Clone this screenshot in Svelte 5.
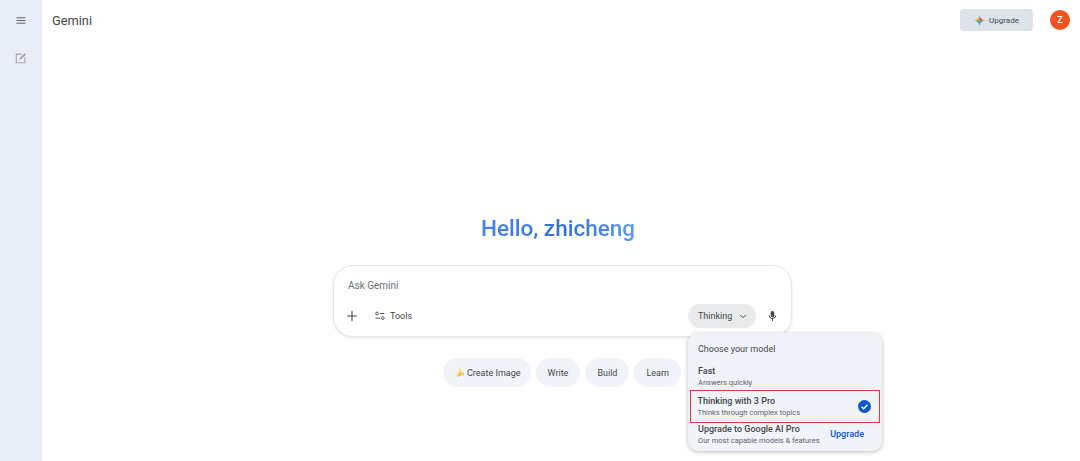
<script>
  const chips = ['Write', 'Build', 'Learn'];
</script>

<div class="page">
  <aside class="rail">
    <button class="rail-btn menu" aria-label="Menu">
      <svg width="10" height="7" viewBox="0 0 10 7"><path d="M.5 .8h9M.5 3.500h9M.5 6.200h9" stroke="#5f6368" stroke-width="1" fill="none" /></svg>
    </button>
    <button class="rail-btn new" aria-label="New chat">
      <svg width="12" height="12" viewBox="0 0 14 14" fill="none">
        <path d="M7.500 2.500H1.500v10h10V6.500" stroke="#a2a6ab" stroke-width="1.300" />
        <path d="M5.500 8.600V7l5.800-5.800 1.600 1.600L7.100 8.600z" fill="#a2a6ab" />
      </svg>
    </button>
  </aside>

  <main class="main">
    <header class="top">
      <span class="brand">Gemini</span>
      <div class="top-right">
        <button class="upgrade-top">
          <svg width="11" height="11" viewBox="0 0 24 24">
            <path d="M12 0C11 7 7 11 0 12h12z" fill="#f2a93b" />
            <path d="M0 12c7 1 11 5 12 12V12z" fill="#34a853" />
            <path d="M12 24c1-7 5-11 12-12H12z" fill="#4285f4" />
            <path d="M24 12C17 11 13 7 12 0v12z" fill="#ea4335" />
          </svg>
          Upgrade
        </button>
        <span class="avatar">Z</span>
      </div>
    </header>

    <section class="center">
      <h1 class="hello">Hello, zhicheng</h1>

      <div class="composer">
        <div class="placeholder">Ask Gemini</div>
        <div class="tools-row">
          <div class="tools-left">
            <svg class="plus" width="10" height="10" viewBox="0 0 10 10"><path d="M5 0v10M0 5h10" stroke="#444746" stroke-width="1.100" /></svg>
            <span class="tools">
              <svg width="10" height="10" viewBox="0 0 11 10" fill="none" stroke="#444746" stroke-width="1">
                <circle cx="2.200" cy="2.200" r="1.500" />
                <path d="M5.200 2.200h5M.6 7.400h5" />
                <circle cx="8.600" cy="7.400" r="1.500" />
              </svg>
              Tools
            </span>
          </div>
          <div class="tools-right">
            <span class="mode">
              Thinking
              <svg width="8" height="5" viewBox="0 0 9 6" fill="none"><path d="M1 1l3.500 3.500L8 1" stroke="#444746" stroke-width="1.100" /></svg>
            </span>
            <svg class="mic" width="9" height="12" viewBox="0 0 10 12" fill="#444746">
              <rect x="3" y="0.500" width="4" height="7" rx="2" />
              <path d="M1 5.500h1c0 1.800 1.300 2.800 3 2.800s3-1 3-2.800h1c0 2.200-1.500 3.500-3.500 3.700V11.500h-1V9.200C2.500 9 1 7.700 1 5.500z" />
            </svg>
          </div>
        </div>

        <div class="popup">
          <div class="popup-title">Choose your model</div>
          <div class="opt">
            <div class="opt-text">
              <div class="opt-name">Fast</div>
              <div class="opt-sub">Answers quickly</div>
            </div>
          </div>
          <div class="opt selected">
            <div class="opt-text">
              <div class="opt-name">Thinking with 3 Pro</div>
              <div class="opt-sub">Thinks through complex topics</div>
            </div>
            <svg width="13" height="13" viewBox="0 0 13 13">
              <circle cx="6.500" cy="6.500" r="6.500" fill="#0b57d0" />
              <path d="M3.500 6.700l2.100 2 3.900-4" fill="none" stroke="#fff" stroke-width="1.400" />
            </svg>
          </div>
          <div class="opt last">
            <div class="opt-text">
              <div class="opt-name">Upgrade to Google AI Pro</div>
              <div class="opt-sub">Our most capable models &amp; features</div>
            </div>
            <span class="opt-link">Upgrade</span>
          </div>
        </div>
      </div>

      <div class="chips">
        <span class="chip first"><span class="banana">🍌</span>Create Image</span>
        {#each chips as c}
          <span class="chip">{c}</span>
        {/each}
      </div>
    </section>
  </main>
</div>

<style>
  :global(body) {
    margin: 0;
    background: #fff;
    font-family: Roboto, "Liberation Sans", sans-serif;
    color: #444746;
  }
  button {
    font: inherit;
    border: 0;
    background: none;
    padding: 0;
  }
  .page {
    display: flex;
    height: 461px;
    overflow: hidden;
  }
  .rail {
    width: 42px;
    flex: none;
    background: #e9eef6;
    display: flex;
    flex-direction: column;
    align-items: center;
    padding-top: 17px;
    box-sizing: border-box;
  }
  .rail-btn {
    display: flex;
    line-height: 0;
  }
  .rail-btn.new {
    margin-top: 28px;
  }
  .main {
    flex: 1;
    display: flex;
    flex-direction: column;
    min-width: 0;
  }
  .top {
    display: flex;
    align-items: center;
    justify-content: space-between;
    height: 40px;
    padding: 0 10px;
  }
  .brand {
    font-size: 12.800px;
    color: #444746;
  }
  .top-right {
    display: flex;
    align-items: center;
    gap: 17px;
  }
  .upgrade-top {
    width: 73px;
    height: 22px;
    border-radius: 4px;
    background: #dde3ea;
    color: #444746;
    font-size: 8px;
    display: flex;
    align-items: center;
    justify-content: center;
    gap: 4px;
  }
  .avatar {
    width: 20px;
    height: 20px;
    border-radius: 50%;
    background: #f4511e;
    color: #fff;
    font-size: 9px;
    font-weight: 500;
    display: flex;
    align-items: center;
    justify-content: center;
  }
  .center {
    display: flex;
    flex-direction: column;
    align-items: center;
    padding-top: 172px;
  }
  .hello {
    margin: 0 6px 0 0;
    font-size: 22.500px;
    font-weight: 500;
    line-height: 32px;
    background: linear-gradient(90deg, #4285f4 0%, #2f6fe8 55%, #5a9bf0 100%);
    -webkit-background-clip: text;
    background-clip: text;
    color: transparent;
  }
  .composer {
    position: relative;
    width: 459px;
    height: 72px;
    margin-top: 21px;
    margin-left: 3px;
    box-sizing: border-box;
    border: 1px solid #e3e6ea;
    border-radius: 20px;
    background: #fff;
    box-shadow: 0 1px 3px rgba(60, 64, 67, 0.12);
    padding: 13px 14px 0 14px;
  }
  .placeholder {
    font-size: 10px;
    line-height: 14px;
    color: #6b6f73;
  }
  .tools-row {
    display: flex;
    align-items: center;
    justify-content: space-between;
    margin-top: 11px;
    height: 24px;
  }
  .tools-left {
    display: flex;
    align-items: center;
    gap: 18px;
  }
  .plus {
    margin-left: -1px;
  }
  .tools {
    display: flex;
    align-items: center;
    gap: 5px;
    font-size: 9px;
  }
  .tools-right {
    display: flex;
    align-items: center;
    gap: 12px;
  }
  .mode {
    width: 68px;
    height: 24px;
    border-radius: 12px;
    background: #e9eaeb;
    font-size: 9px;
    display: flex;
    align-items: center;
    gap: 7px;
    box-sizing: border-box;
    padding-left: 10px;
  }
  .popup {
    position: absolute;
    left: 354px;
    top: 67px;
    width: 194px;
    height: 118px;
    box-sizing: border-box;
    background: #f0f4f9;
    border-radius: 10px;
    box-shadow: 0 1px 4px rgba(60, 64, 67, 0.35);
    padding: 10px 2px 0 2px;
    z-index: 2;
  }
  .popup-title {
    font-size: 9px;
    line-height: 13px;
    padding-left: 8px;
    margin-bottom: 7.500px;
  }
  .opt {
    display: flex;
    align-items: center;
    justify-content: space-between;
    height: 25px;
    padding: 0 8px;
    box-sizing: border-box;
  }
  .opt.selected {
    height: 33px;
    margin-top: 1.500px;
    border: 1.500px solid #e53935;
    padding-left: 6.500px;
    padding-right: 8px;
  }
  .opt.last {
    margin-top: -4px;
    height: 30px;
    padding-right: 16px;
  }
  .opt-name {
    font-size: 9px;
    font-weight: 500;
    line-height: 12px;
    color: #444746;
  }
  .opt-sub {
    font-size: 7.500px;
    line-height: 11px;
    color: #5f6368;
  }
  .opt-link {
    font-size: 9px;
    font-weight: 500;
    color: #0b57d0;
  }
  .chips {
    display: flex;
    align-items: center;
    gap: 5px;
    margin-top: 21px;
    align-self: flex-start;
    margin-left: 401px;
  }
  .chip {
    height: 29px;
    padding: 0 12px;
    border-radius: 15px;
    background: #f0f4f9;
    font-size: 9px;
    display: flex;
    align-items: center;
  }
  .chip.first {
    padding-right: 10px;
  }
  .banana {
    font-size: 8px;
    margin-right: 2px;
  }
  .mic {
    display: block;
  }
</style>
